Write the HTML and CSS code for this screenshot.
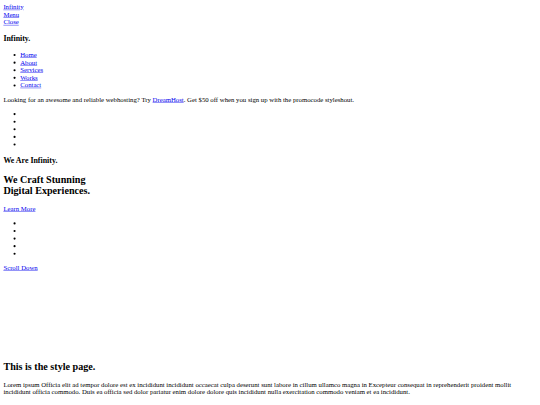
FILE: index.html
```html
<!DOCTYPE html>
<html lang="en">
<head>
<meta charset="utf-8">
<title>Infinity</title>
<link rel="stylesheet" href="styles.css">
</head>
<body class="page">
<div class="canvas">
<header class="site-header">
  <div class="logo"><a href="#">Infinity</a></div>
  <a class="menu-toggle" href="#">Menu</a>
  <nav class="main-nav">
    <a class="close-mobile" href="#">Close</a>
    <h3>Infinity.</h3>
    <ul class="nav-list">
      <li><a href="#">Home</a></li>
      <li><a href="#">About</a></li>
      <li><a href="#">Services</a></li>
      <li><a href="#">Works</a></li>
      <li><a href="#">Contact</a></li>
    </ul>
    <p class="sponsor">Looking for an awesome and reliable webhosting? Try <a href="#">DreamHost</a>. Get $50 off when you sign up with the promocode styleshout.</p>
    <ul class="social-list">
      <li></li><li></li><li></li><li></li><li></li>
    </ul>
  </nav>
</header>
<section class="home">
  <div class="home-content">
    <h3>We Are Infinity.</h3>
    <h1 class="section-title">We Craft Stunning<br>Digital Experiences.</h1>
    <div class="more"><a href="#">Learn More</a></div>
  </div>
  <ul class="home-social">
    <li></li><li></li><li></li><li></li><li></li>
  </ul>
  <div class="scrolldown"><a href="#">Scroll Down</a></div>
</section>
<section class="styles">
  <div class="spacer"></div>
  <h1 class="section-title">This is the style page.</h1>
  <p>Lorem ipsum Officia elit ad tempor dolore est ex incididunt incididunt occaecat culpa deserunt sunt labore in cillum ullamco magna in Excepteur consequat in reprehenderit proident mollit incididunt officia commodo. Duis ea officia sed dolor pariatur enim dolore dolore quis incididunt nulla exercitation commodo veniam et ea incididunt.</p>
</section>
</div>
</body>
</html>
```
FILE: styles.css
```css
html {
  overflow: hidden;
}
.page {
  margin: 0;
  font-family: "Liberation Serif", "Times New Roman", serif;
}
.canvas {
  width: 1264px;
  padding: 8px;
  transform: scale(0.421875);
  transform-origin: 0 0;
}
.logo,
.menu-toggle,
.close-mobile {
  display: block;
}
.section-title {
  font-size: 1.5em;
  margin: 0.83em 0;
}
.spacer {
  height: 192px;
}
```
